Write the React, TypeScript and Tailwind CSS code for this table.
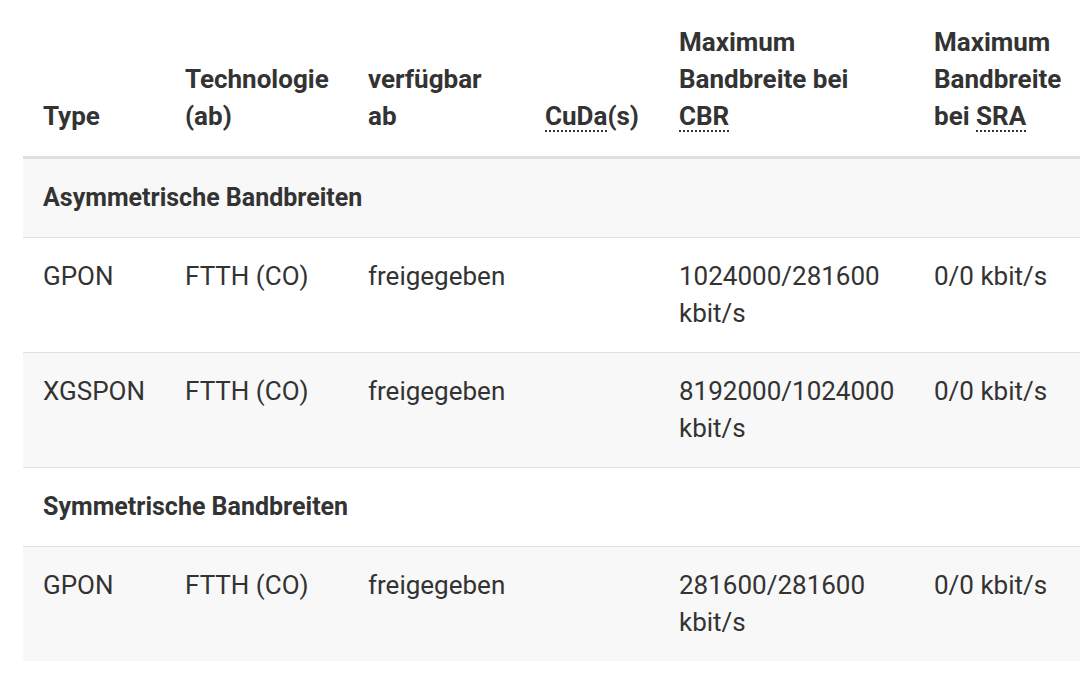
type Row =
  | { kind: 'section'; label: string }
  | { kind: 'data'; type: string; tech: string; avail: string; cuda: string; cbr: string[]; sra: string };

const data: Row[] = [
  { kind: 'section', label: 'Asymmetrische Bandbreiten' },
  { kind: 'data', type: 'GPON', tech: 'FTTH (CO)', avail: 'freigegeben', cuda: '', cbr: ['1024000/281600', 'kbit/s'], sra: '0/0 kbit/s' },
  { kind: 'data', type: 'XGSPON', tech: 'FTTH (CO)', avail: 'freigegeben', cuda: '', cbr: ['8192000/1024000', 'kbit/s'], sra: '0/0 kbit/s' },
  { kind: 'section', label: 'Symmetrische Bandbreiten' },
  { kind: 'data', type: 'GPON', tech: 'FTTH (CO)', avail: 'freigegeben', cuda: '', cbr: ['281600/281600', 'kbit/s'], sra: '0/0 kbit/s' },
];

function Abbr({ children }: { children: React.ReactNode }) {
  return <abbr className="underline decoration-dotted decoration-2 underline-offset-[5px]">{children}</abbr>;
}

export default function App() {
  return (
    <div
      className="w-[1080px] h-[686px] overflow-hidden bg-white pl-[23px] text-[#333333] text-[25px] leading-[37px]"
      style={{ fontFamily: 'Roboto, "Liberation Sans", sans-serif' }}
    >
      <table className="table-fixed border-collapse w-[1100px]">
        <colgroup>
          <col className="w-[142px]" />
          <col className="w-[183px]" />
          <col className="w-[177px]" />
          <col className="w-[134px]" />
          <col className="w-[255px]" />
          <col className="w-[209px]" />
        </colgroup>
        <thead>
          <tr className="border-b-[3px] border-[#dedede] text-left align-bottom text-[26px]">
            <th className="pl-5 pr-2 pt-6 pb-[21px] font-bold">Type</th>
            <th className="pl-5 pr-2 pt-6 pb-[21px] font-bold">Technologie (ab)</th>
            <th className="pl-5 pr-5 pt-6 pb-[21px] font-bold">verfügbar ab</th>
            <th className="pl-5 pr-2 pt-6 pb-[21px] font-bold">
              <Abbr>CuDa</Abbr>(s)
            </th>
            <th className="pl-5 pr-5 pt-6 pb-[21px] font-bold">
              Maximum Bandbreite bei <Abbr>CBR</Abbr>
            </th>
            <th className="pl-5 pr-2 pt-6 pb-[21px] font-bold">
              <span className="block w-[140px]">
                Maximum Bandbreite bei <Abbr>SRA</Abbr>
              </span>
            </th>
          </tr>
        </thead>
        <tbody>
          {data.map((r, i) => {
            const bg = i % 2 === 0 ? 'bg-[#f8f8f8]' : 'bg-white';
            const border = i < data.length - 1 ? 'border-b border-[#e2e2e2]' : '';
            if (r.kind === 'section') {
              return (
                <tr key={i} className={`${bg} ${border}`}>
                  <td colSpan={6} className="pl-5 pt-5 pb-[21px] font-bold">
                    {r.label}
                  </td>
                </tr>
              );
            }
            return (
              <tr key={i} className={`${bg} ${border} align-top text-[26px]`}>
                <td className="pl-5 pr-2 py-5">{r.type}</td>
                <td className="pl-5 pr-2 py-5">{r.tech}</td>
                <td className="pl-5 pr-2 py-5">{r.avail}</td>
                <td className="pl-5 pr-2 py-5">{r.cuda}</td>
                <td className="pl-5 pr-2 py-5">
                  {r.cbr[0]}
                  <br />
                  {r.cbr[1]}
                </td>
                <td className="pl-5 pr-2 py-5">{r.sra}</td>
              </tr>
            );
          })}
        </tbody>
      </table>
    </div>
  );
}
